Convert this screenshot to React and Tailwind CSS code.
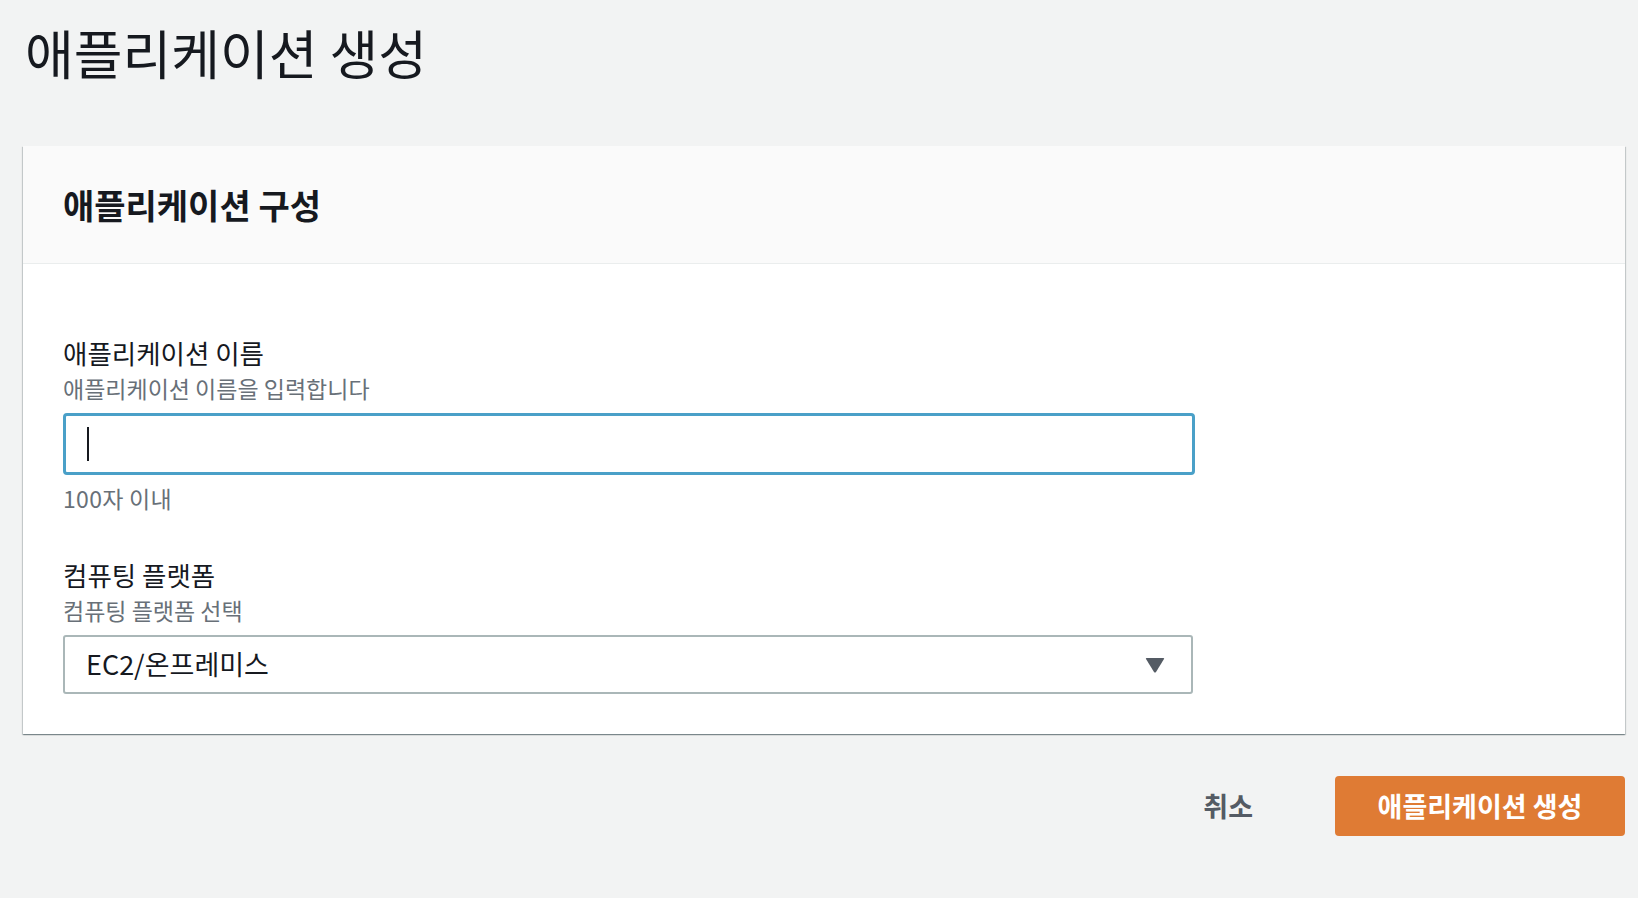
import React from 'react';

const font = { fontFamily: '"Noto Sans CJK KR", "Noto Sans", sans-serif' };

function Field({ label, desc, children, hint }) {
  return (
    <div className="flex flex-col">
      <div className="text-[26.5px] leading-[32px] text-[#16191f]">{label}</div>
      <div className="text-[23px] leading-[30px] text-[#687078] mt-[4px]">{desc}</div>
      <div className="mt-[10px]">{children}</div>
      {hint && <div className="text-[23px] leading-[30px] text-[#687078] mt-[8px] tracking-[0.3px]">{hint}</div>}
    </div>
  );
}

export default function App() {
  return (
    <div className="min-h-screen w-full bg-[#f2f3f3] pl-[23px] pr-[13px] pt-[20px]" style={font}>
      <h1 className="text-[53px] leading-[64px] text-[#16191f] pl-[2px] font-normal">애플리케이션 생성</h1>

      <div className="mt-[62px] bg-white shadow-[0_1px_1px_0_rgba(0,28,36,0.3),1px_1px_1px_0_rgba(0,28,36,0.15),-1px_1px_1px_0_rgba(0,28,36,0.15)]">
        <div className="h-[118px] bg-[#fafafa] border-b border-[#eaeded] flex items-center px-[40px]">
          <h2 className="text-[34px] leading-[40px] font-bold text-[#16191f]">애플리케이션 구성</h2>
        </div>

        <div className="px-[40px] pt-[73px] pb-[40px] flex flex-col gap-[46px]">
          <Field label="애플리케이션 이름" desc="애플리케이션 이름을 입력합니다" hint="100자 이내">
            <div className="w-[1132px] h-[62px] rounded-[4px] border-[3px] border-[#4aa0c8] bg-white flex items-center pl-[21px]">
              <div className="w-[2px] h-[34px] bg-[#16191f]" />
            </div>
          </Field>

          <Field label="컴퓨팅 플랫폼" desc="컴퓨팅 플랫폼 선택">
            <div className="w-[1130px] h-[59px] rounded-[3px] border-2 border-[#aab7b8] bg-white flex items-center justify-between pl-[21px] pr-[26px]">
              <span className="text-[27px] text-[#16191f]">EC2/온프레미스</span>
              <svg width="20" height="16" viewBox="0 0 20 16">
                <path d="M1.5 1 H18.5 Q19.5 1 19 2 L11 15 Q10 16.2 9 15 L1 2 Q0.5 1 1.5 1 Z" fill="#545b64" />
              </svg>
            </div>
          </Field>
        </div>
      </div>

      <div className="flex justify-end items-center mt-[42px] gap-[82px]">
        <button className="text-[27px] font-bold text-[#545b64]">취소</button>
        <button className="w-[290px] h-[60px] rounded-[4px] bg-[#df7b34] text-white text-[27px] font-bold">애플리케이션 생성</button>
      </div>
    </div>
  );
}
